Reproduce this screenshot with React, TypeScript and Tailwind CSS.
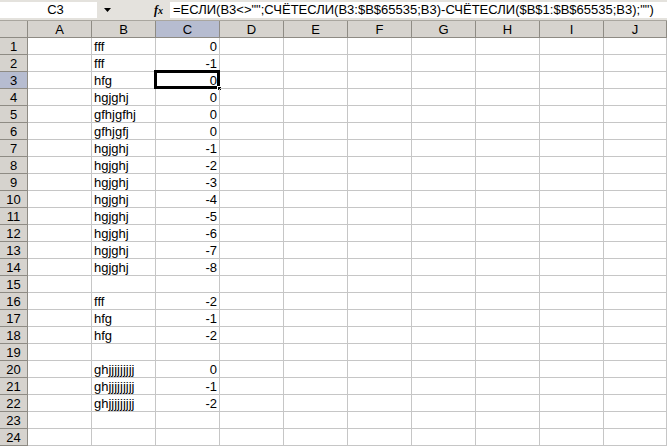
import { ReactNode } from "react";

const columns = ["A", "B", "C", "D", "E", "F", "G", "H", "I", "J"];

// [B, C] values for rows 1..24
const rows: [string, string][] = [
  ["fff", "0"],
  ["fff", "-1"],
  ["hfg", "0"],
  ["hgjghj", "0"],
  ["gfhjgfhj", "0"],
  ["gfhjgfj", "0"],
  ["hgjghj", "-1"],
  ["hgjghj", "-2"],
  ["hgjghj", "-3"],
  ["hgjghj", "-4"],
  ["hgjghj", "-5"],
  ["hgjghj", "-6"],
  ["hgjghj", "-7"],
  ["hgjghj", "-8"],
  ["", ""],
  ["fff", "-2"],
  ["hfg", "-1"],
  ["hfg", "-2"],
  ["", ""],
  ["ghjjjjjjjjj", "0"],
  ["ghjjjjjjjjj", "-1"],
  ["ghjjjjjjjjj", "-2"],
  ["", ""],
  ["", ""],
];

const formula = '=ЕСЛИ(B3<>"";СЧЁТЕСЛИ(B3:$B$65535;B3)-СЧЁТЕСЛИ($B$1:$B$65535;B3);"")';

function HeaderCell({ children, active }: { children?: ReactNode; active?: boolean }) {
  return (
    <div
      className={
        "h-[17px] flex items-center justify-center border-r border-b border-[#8e8b84] leading-none " +
        (active ? "bg-[#b6bcd0]" : "bg-[#d6d3ce]")
      }
    >
      {children}
    </div>
  );
}

export default function App() {
  return (
    <div
      className="w-[667px] h-[447px] overflow-hidden bg-white text-[13px] text-black"
      style={{ fontFamily: '"Liberation Sans", Arial, sans-serif' }}
    >
      {/* formula bar */}
      <div className="h-[21px] bg-[#e4e2dd] flex items-center border-b border-[#a9a69f]">
        <div className="ml-0 h-[16px] w-[97px] bg-white flex items-center justify-center pl-[14px]">C3</div>
        <div className="w-[21px] h-[16px] flex items-center justify-center">
          <svg width="7" height="4" viewBox="0 0 7 4">
            <path d="M0 0h7L3.5 4z" fill="#000" />
          </svg>
        </div>
        <div className="w-[36px]" />
        <span className="italic font-bold text-[12px] w-[14px]" style={{ fontFamily: '"Liberation Serif", serif' }}>
          f<span className="text-[10px]">x</span>
        </span>
        <div className="flex-1 h-[16px] bg-white flex items-center pl-[3px] ml-[2px] whitespace-nowrap">{formula}</div>
      </div>

      {/* sheet */}
      <div className="grid grid-cols-[28px_repeat(9,64px)_1fr]">
        <HeaderCell />
        {columns.map((c) => (
          <HeaderCell key={c} active={c === "C"}>
            {c}
          </HeaderCell>
        ))}

        {rows.map(([b, c], i) => {
          const n = i + 1;
          return [
            <HeaderCell key={`h${n}`} active={n === 3}>
              {n}
            </HeaderCell>,
            ...columns.map((col) => {
              const selected = col === "C" && n === 3;
              return (
                <div
                  key={`${col}${n}`}
                  className="relative h-[17px] border-r border-b border-[#c6c6c6] flex items-center leading-none whitespace-nowrap"
                >
                  {col === "B" && <span className="pl-[2px]">{b}</span>}
                  {col === "C" && <span className="ml-auto pr-[2px]">{c}</span>}
                  {selected && (
                    <>
                      <div className="absolute -left-[2px] -top-[2px] -right-[1px] -bottom-[1px] border-[3px] border-black pointer-events-none" />
                      <div className="absolute -right-[3px] -bottom-[3px] w-[5px] h-[5px] bg-black border border-white" />
                    </>
                  )}
                </div>
              );
            }),
          ];
        })}
      </div>
    </div>
  );
}
